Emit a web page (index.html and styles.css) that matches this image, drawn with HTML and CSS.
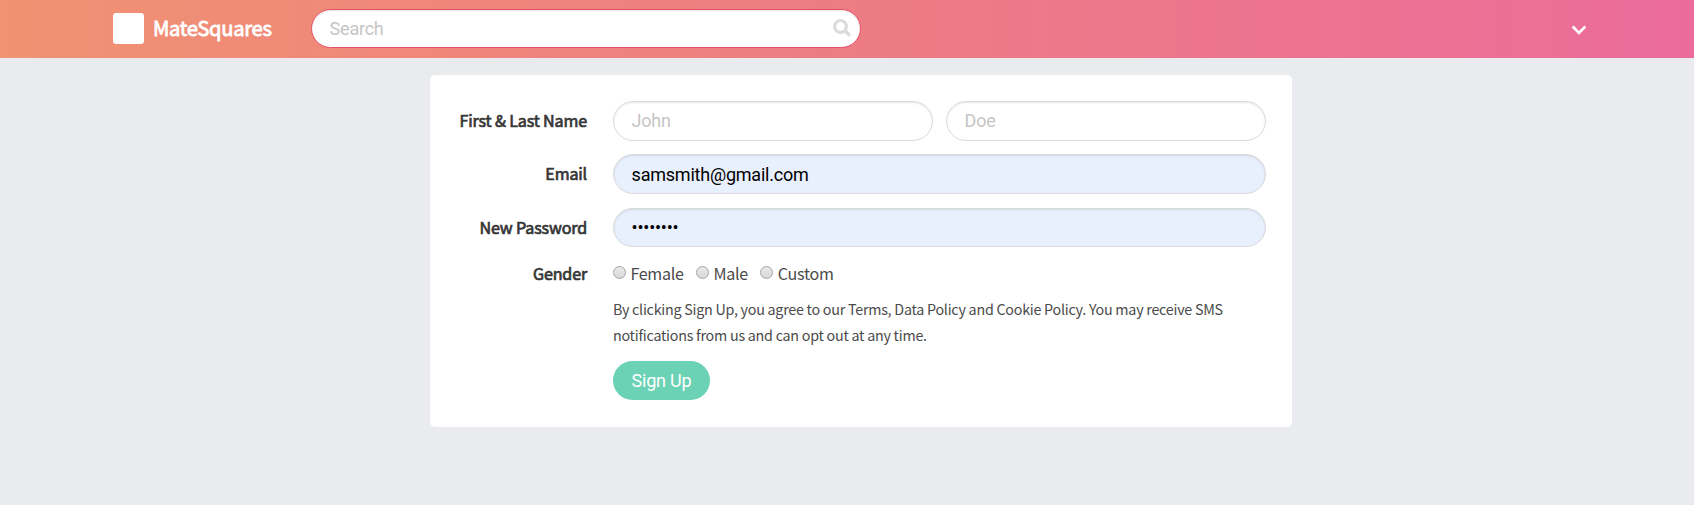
FILE: index.html
```html
<!DOCTYPE html>
<html lang="en">
<head>
<meta charset="utf-8">
<title>MateSquares</title>
<link rel="stylesheet" href="styles.css">
</head>
<body>
<header class="topbar">
  <a class="brand"><span class="brand-mark"></span><span class="brand-name">MateSquares</span></a>
  <div class="search">
    <input class="search-input" type="text" placeholder="Search">
    <svg class="search-icon" viewBox="0 0 18 18"><circle cx="7.5" cy="7.5" r="5.9" fill="none" stroke="currentColor" stroke-width="3"/><path d="M11.8 11.5L16.8 16.5" stroke="currentColor" stroke-width="3.6"/></svg>
  </div>
  <svg class="chevron" viewBox="0 0 16 10"><path d="M1.7 1.5L8 7.8L14.3 1.5" fill="none" stroke="currentColor" stroke-width="2.6"/></svg>
</header>
<main class="card">
  <form class="form">
    <label class="label">First &amp; Last Name</label>
    <div class="pair">
      <input class="field" type="text" placeholder="John">
      <input class="field" type="text" placeholder="Doe">
    </div>
    <label class="label">Email</label>
    <input class="field filled" type="text" value="samsmith@gmail.com">
    <label class="label">New Password</label>
    <input class="field filled password" type="password" value="password">
    <span class="label gender-label">Gender</span>
    <div class="options">
      <label class="option"><span class="radio"></span><span>Female</span></label>
      <label class="option"><span class="radio"></span><span>Male</span></label>
      <label class="option"><span class="radio"></span><span>Custom</span></label>
    </div>
    <p class="terms">By clicking Sign Up, you agree to our Terms, Data Policy and Cookie Policy. You may receive SMS<br>notifications from us and can opt out at any time.</p>
    <button class="submit" type="button">Sign Up</button>
  </form>
</main>
</body>
</html>
```
FILE: styles.css
```css
* { box-sizing: border-box; }
body {
  margin: 0;
  min-height: 100vh;
  background: #e9ebee;
  color: #4a4a4a;
  font-family: "Noto Sans CJK SC", sans-serif;
  font-size: 16.1px;
  letter-spacing: -.3px;
}
.topbar {
  display: flex;
  align-items: center;
  height: 58px;
  padding: 0 107px 1px 113px;
  background: linear-gradient(90deg, #f19272 0%, #ed7c83 50%, #eb6c9b 100%);
  color: #fff;
}
.brand { display: flex; align-items: center; gap: 9px; width: 198px; }
.brand-mark { width: 31px; height: 31px; border-radius: 3px; background: #fff; }
.brand-name { margin-top: -2px; font-size: 20.2px; -webkit-text-stroke: .8px #fff; line-height: 32px; }
.search { position: relative; width: 550px; height: 39px; }
.search-input, .field {
  display: block;
  width: 100%;
  min-width: 0;
  height: 39px;
  margin: 0;
  padding: 0 18px 1px 17.6px;
  border: 1px solid #dbdbdb;
  border-radius: 20px;
  outline: 0;
  background: #fff;
  box-shadow: inset 0 1px 2px rgba(10, 10, 10, .1);
  color: #000;
  font-family: Roboto, sans-serif;
  font-size: 18px;
  letter-spacing: -.22px;
}
.search-input { border-color: #e64e66; }
::placeholder { color: #c5c5c5; opacity: 1; }
.search-icon { position: absolute; right: 10px; top: 10px; width: 18px; height: 18px; color: #dbdbdb; }
.chevron { width: 16px; height: 10px; margin-left: auto; margin-top: 3px; }
.card {
  width: 862px;
  height: 352px;
  margin: 17px 0 0 430px;
  padding: 26px;
  border-radius: 5px;
  background: #fff;
}
.form {
  display: grid;
  grid-template-columns: 131px 653px;
  grid-template-rows: 53px 54px 54px 26px 53px 39px;
  column-gap: 26px;
}
.label {
  color: #363636;
  -webkit-text-stroke: .7px #363636;
  letter-spacing: -.15px;
  line-height: 26px;
  padding-top: 6px;
  text-align: right;
  white-space: nowrap;
}
.gender-label { padding-top: 0; margin-top: -2px; }
.pair { display: grid; grid-template-columns: 1fr 1fr; gap: 13px; }
.field { height: 40px; }
.filled { padding-bottom: 0; background: #e8effd; }
.password { height: 39px; }
.options { display: flex; gap: 12.5px; height: 26px; line-height: 26px; margin-top: -2px; }
.option { display: flex; align-items: center; gap: 4.4px; color: #4a4a4a; }
.radio {
  width: 13px;
  height: 13px;
  margin-top: -1px;
  border: 1px solid #a5a5a5;
  border-radius: 50%;
  background: linear-gradient(#e9e9e9, #d8d8d8);
}
.terms { grid-column: 2; margin: 8px 0 0; font-size: 14.3px; letter-spacing: -.25px; line-height: 26px; white-space: nowrap; }
.submit {
  grid-column: 2;
  justify-self: start;
  width: 97px;
  height: 39px;
  margin-top: 20px;
  padding: 0;
  border: 0;
  border-radius: 20px;
  background: #6bd2b5;
  color: #fff;
  font-family: Roboto, sans-serif;
  font-size: 18px;
  letter-spacing: -.22px;
}
```
